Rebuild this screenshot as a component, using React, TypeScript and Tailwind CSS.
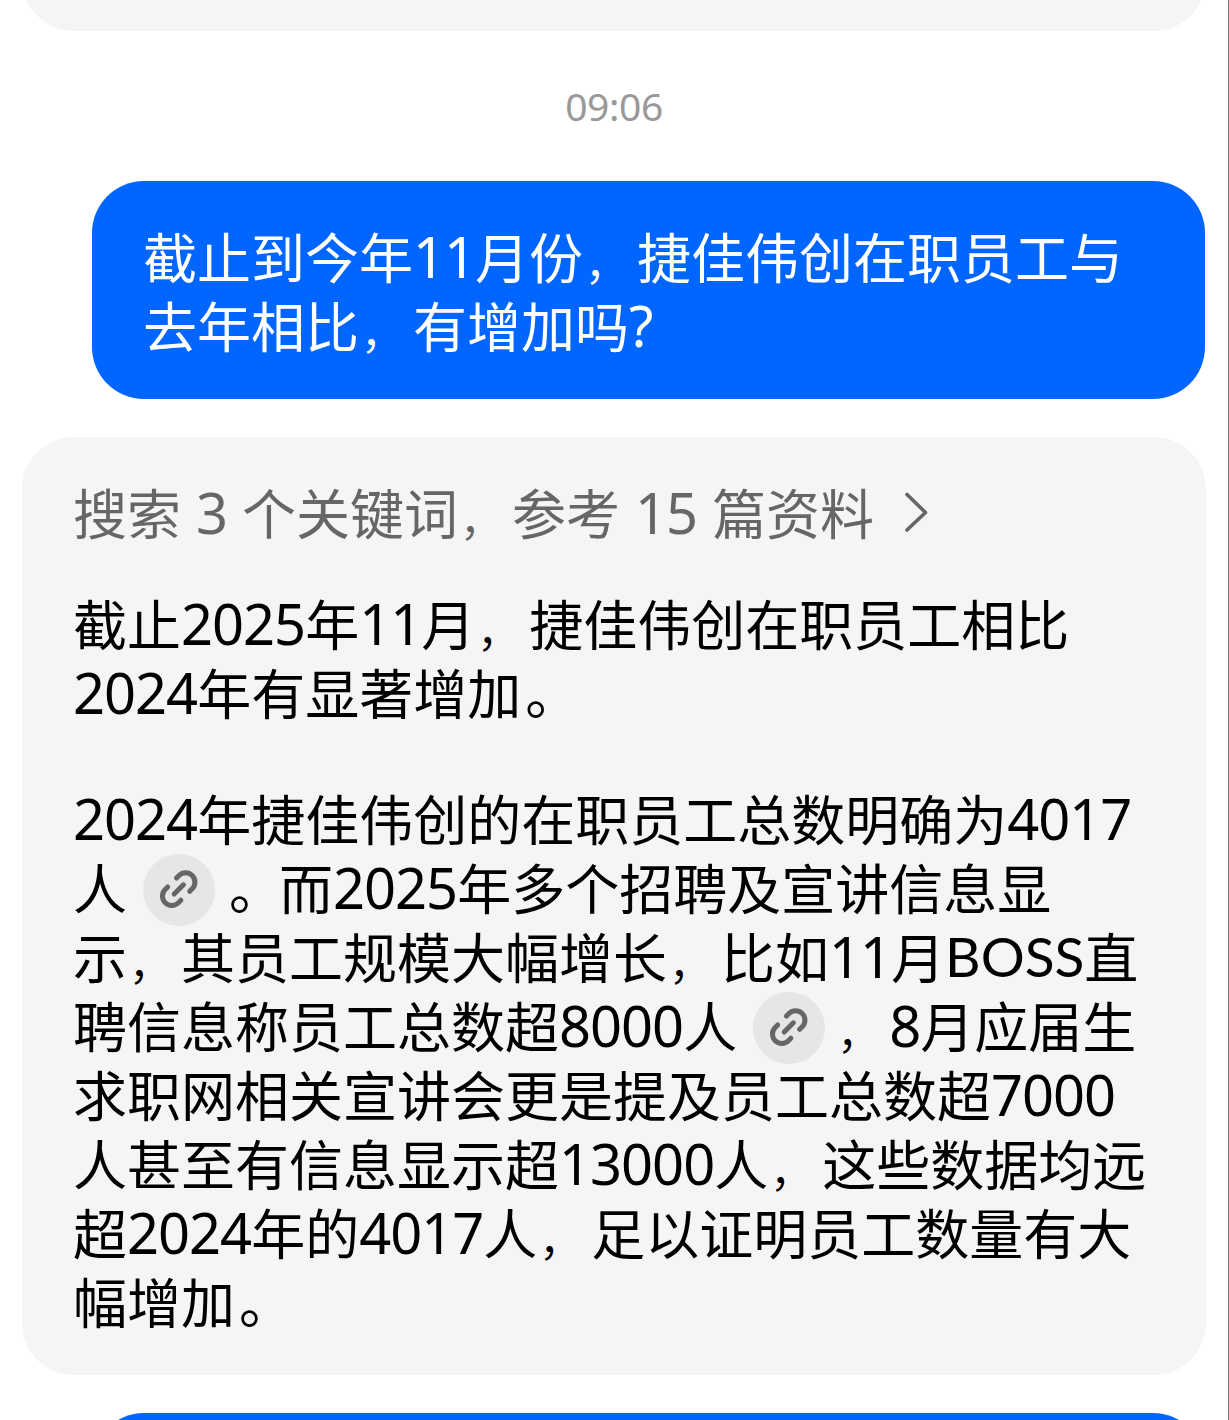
import React from 'react';
import clsx from 'clsx';

const LinkChip: React.FC = () => (
  <button className="inline-flex items-center justify-center w-[72px] h-[72px] ml-[16px] mr-[10px] pb-px shrink-0 rounded-full bg-[#e6e6e6]">
    <svg
      className="w-[44px] h-[44px]"
      viewBox="0 0 44 44"
      fill="none"
      stroke="#666666"
      strokeWidth="5"
      strokeLinecap="round"
      strokeLinejoin="round"
    >
      <path d="M19.5 11.1 L22 8.6 A9.3 9.3 0 0 1 35.2 21.8 L32.7 24.3" />
      <path d="M10.7 20 L8.2 22.5 A9.3 9.3 0 0 0 21.4 35.7 L23.9 33.2" />
      <path d="M17.2 27 L26.4 17.8" />
    </svg>
  </button>
);

const Num: React.FC<{ children: React.ReactNode }> = ({ children }) => (
  <span className="block pb-1 text-[56px] tracking-[-1px]">{children}</span>
);

// Small comma in a full-width cell
const Comma: React.FC = () => <span className="w-[54px] pt-2.5 pl-[2px] text-[42px]">，</span>;
const Stop: React.FC = () => <span className="w-[54px] pl-1">。</span>;

const Line: React.FC<{ children: React.ReactNode; className?: string }> = ({ children, className }) => (
  <div className={clsx('flex items-center h-[69px] leading-[69px] whitespace-pre', className)}>{children}</div>
);

const App: React.FC = () => {
  return (
    <div className="w-[1229px] h-[1420px] overflow-hidden bg-white border-r border-[#7d7d7d] font-['Noto_Sans','Noto_Sans_CJK_SC',sans-serif] text-[54px] text-black">
      {/* Previous answer */}
      <div className="h-[31px] ml-[22px] w-[1184px] overflow-hidden flex items-end">
        <div className="w-full h-[120px] shrink-0 rounded-[52px] bg-[#f5f5f5]" />
      </div>

      {/* Timestamp */}
      <div className="h-[150px] flex items-center justify-center text-[39px] text-[#999999]">
        <span className="tracking-[-0.4px]">09:06</span>
      </div>

      {/* User message */}
      <div className="ml-[92px] w-[1113px] h-[218px] pl-[51px] pt-[43px] rounded-[52px] bg-[#0066ff] text-white">
        <Line>截止到今年<Num>11</Num>月份<Comma />捷佳伟创在职员工与</Line>
        <Line>去年相比<Comma />有增加吗<Num>?</Num></Line>
      </div>

      {/* Answer */}
      <div className="mt-[38px] ml-[22px] w-[1184px] h-[938px] pl-[51px] pt-[43px] rounded-[52px] bg-[#f5f5f5]">
        <Line className="text-[#666666]">
          搜索<span className="mx-[15px]"><Num>3</Num></span>个关键词<Comma />参考
          <span className="mx-[15px]"><Num>15</Num></span>篇资料
          <svg className="ml-[30px] mb-[5px] w-[24px] h-[40px]" viewBox="0 0 24 40" fill="none" stroke="#666666" strokeWidth="3.6" strokeLinecap="round" strokeLinejoin="round">
            <path d="M3 2.5 L21.5 20.5 L3 38" />
          </svg>
        </Line>

        <div className="mt-[42px]">
          <Line>截止<Num>2025</Num>年<Num>11</Num>月<Comma />捷佳伟创在职员工相比</Line>
          <Line><Num>2024</Num>年有显著增加<Stop /></Line>
        </div>

        <div className="mt-[57px]">
          <Line><Num>2024</Num>年捷佳伟创的在职员工总数明确为<Num>4017</Num></Line>
          <Line>人<LinkChip /><Stop />而<Num>2025</Num>年多个招聘及宣讲信息显</Line>
          <Line>示<Comma />其员工规模大幅增长<Comma />比如<Num>11</Num>月<span className="pb-1 font-[Lato] text-[55px]">BOSS</span>直</Line>
          <Line>聘信息称员工总数超<Num>8000</Num>人<LinkChip /><Comma /><Num>8</Num>月应届生</Line>
          <Line>求职网相关宣讲会更是提及员工总数超<Num>7000</Num></Line>
          <Line>人甚至有信息显示超<Num>13000</Num>人<Comma />这些数据均远</Line>
          <Line>超<Num>2024</Num>年的<Num>4017</Num>人<Comma />足以证明员工数量有大</Line>
          <Line>幅增加<Stop /></Line>
        </div>
      </div>

      {/* Next user message */}
      <div className="mt-[38px] ml-[92px] w-[1113px] h-[160px] rounded-[52px] bg-[#0066ff]" />
    </div>
  );
};

export default App;
